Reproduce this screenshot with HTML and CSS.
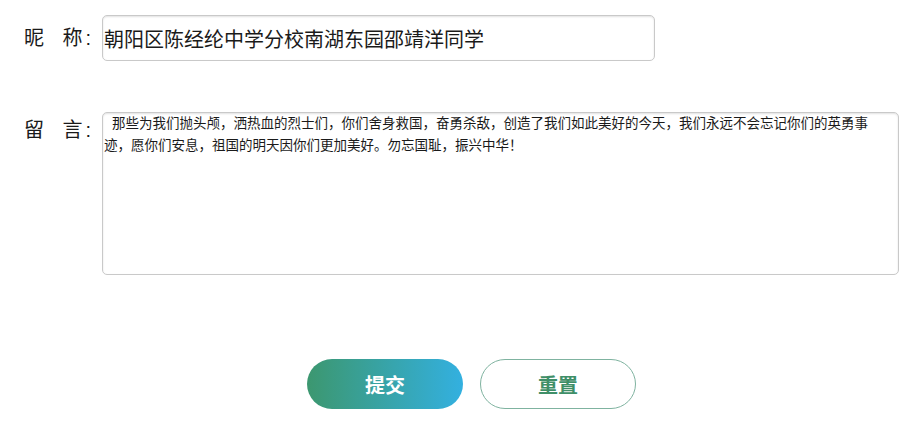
FILE: index.html
```html
<!DOCTYPE html>
<html lang="zh-CN">
<head>
  <meta charset="UTF-8" />
  <title>留言</title>
  <link rel="stylesheet" href="styles.css">
</head>
<body>
  <form class="form">
    <div class="row row-name">
      <label class="label" for="nick"><span>昵</span><span class="last">称:</span></label>
      <input class="input" type="text" id="nick" value="朝阳区陈经纶中学分校南湖东园邵靖洋同学" />
    </div>

    <div class="row row-msg">
      <label class="label" for="msg"><span>留</span><span class="last">言:</span></label>
      <textarea class="textarea" id="msg">那些为我们抛头颅，洒热血的烈士们，你们舍身救国，奋勇杀敌，创造了我们如此美好的今天，我们永远不会忘记你们的英勇事迹，愿你们安息，祖国的明天因你们更加美好。勿忘国耻，振兴中华！</textarea>
    </div>

    <div class="buttons">
      <button type="button" class="btn btn-submit">提交</button>
      <button type="reset" class="btn btn-reset">重置</button>
    </div>
  </form>
</body>
</html>
```

FILE: styles.css
```css
body { margin: 0; background: #fff; color: #1a1a1a; font-family: "Liberation Sans", "Noto Sans CJK SC", sans-serif; overflow: hidden; }
.form { width: 900px; }
.row { display: flex; align-items: flex-start; padding-left: 24px; }
.row-name { margin-top: 15px; align-items: center; }
.row-msg { margin-top: 51px; }
.label { display: flex; justify-content: space-between; width: 67px; margin-right: 11px; font-size: 20px; line-height: 22px; }
.label .last { letter-spacing: 3px; margin-right: -3px; }
.row-msg .label { margin-top: 7px; }
.input { box-sizing: border-box; width: 553px; height: 46px; margin: 0; padding: 0 0 0 1px; border: 1px solid #c9c9c9; border-radius: 5px; box-shadow: inset 0 1px 2px rgba(0,0,0,0.12); font-family: inherit; font-size: 20px; color: #1a1a1a; outline: none; }
.textarea { box-sizing: border-box; width: 797px; height: 163px; margin: 0; padding: 0 18px 0 1px; border: 1px solid #c9c9c9; border-radius: 5px; box-shadow: inset 0 1px 2px rgba(0,0,0,0.12); font-family: inherit; font-size: 13.5px; line-height: 22px; text-indent: 8px; color: #1a1a1a; resize: none; outline: none; overflow: hidden; }
.buttons { display: flex; gap: 17px; margin-top: 84px; padding-left: 307px; }
.btn { box-sizing: border-box; width: 156px; height: 50px; border-radius: 25px; font-family: inherit; font-size: 20px; font-weight: bold; cursor: pointer; }
.btn-submit { border: none; color: #fff; background: linear-gradient(to right, #3c976f, #33b0e0); }
.btn-reset { border: 1.5px solid #7fb3a0; color: #3f8f68; background: #fff; }
```
